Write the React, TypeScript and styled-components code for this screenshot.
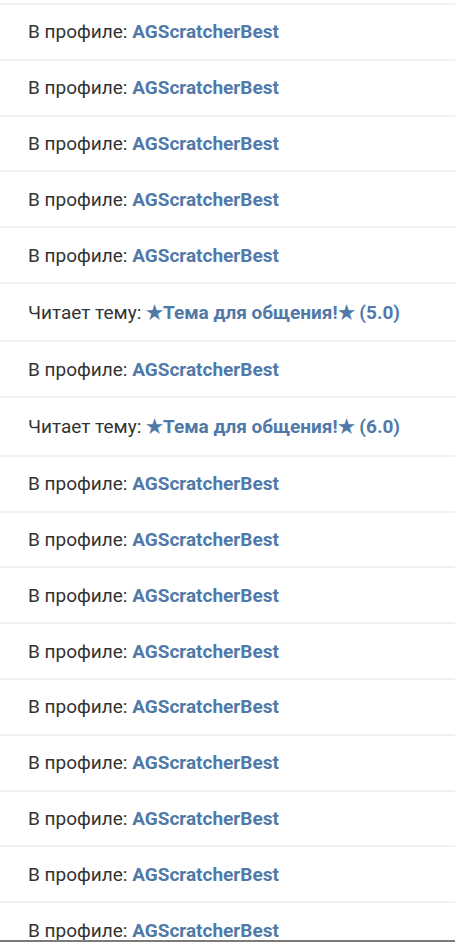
import React from "react";
import styled, { createGlobalStyle } from "styled-components";

const Global = createGlobalStyle`
  html, body { margin: 0; padding: 0; background: #ffffff; }
  body { font-family: Roboto, "Noto Sans", Arial, sans-serif; -webkit-font-smoothing: antialiased; }
`;

const Page = styled.div`
  width: 455px;
  height: 943px;
  overflow: hidden;
  background: #ffffff;
  display: flex;
  flex-direction: column;
  position: relative;
`;

const List = styled.ul`
  list-style: none;
  margin: 0;
  padding: 3px 0 0;
  display: flex;
  flex-direction: column;
`;

const Row = styled.li<{ $tall?: boolean }>`
  flex: 0 0 auto;
  box-sizing: border-box;
  height: ${(p) => (p.$tall ? 58.5 : 55.8)}px;
  border-top: 2px solid #f1f1f3;
  display: flex;
  align-items: center;
  padding: 0 28px;
  font-size: 19px;
  white-space: nowrap;
`;

const Label = styled.span`
  font-weight: 400;
  color: #333333;
`;

const Link = styled.a`
  font-weight: 700;
  color: #5079a9;
  text-decoration: none;
`;

const BottomBar = styled.div`
  position: absolute;
  left: 0;
  right: 0;
  top: 940px;
  height: 2px;
  background: #7a7a7a;
`;

type Item = { kind: "profile" } | { kind: "topic"; score: string };

const items: Item[] = [
  { kind: "profile" },
  { kind: "profile" },
  { kind: "profile" },
  { kind: "profile" },
  { kind: "profile" },
  { kind: "topic", score: "5.0" },
  { kind: "profile" },
  { kind: "topic", score: "6.0" },
  { kind: "profile" },
  { kind: "profile" },
  { kind: "profile" },
  { kind: "profile" },
  { kind: "profile" },
  { kind: "profile" },
  { kind: "profile" },
  { kind: "profile" },
  { kind: "profile" },
];

export default function App() {
  return (
    <Page>
      <Global />
      <List>
        {items.map((it, i) =>
          it.kind === "profile" ? (
            <Row key={i}>
              <Label>В профиле:&nbsp;</Label>
              <Link href="#">AGScratcherBest</Link>
            </Row>
          ) : (
            <Row key={i} $tall>
              <Label>Читает тему:&nbsp;</Label>
              <Link href="#">★Тема для общения!★ ({it.score})</Link>
            </Row>
          )
        )}
      </List>
      <BottomBar />
    </Page>
  );
}
